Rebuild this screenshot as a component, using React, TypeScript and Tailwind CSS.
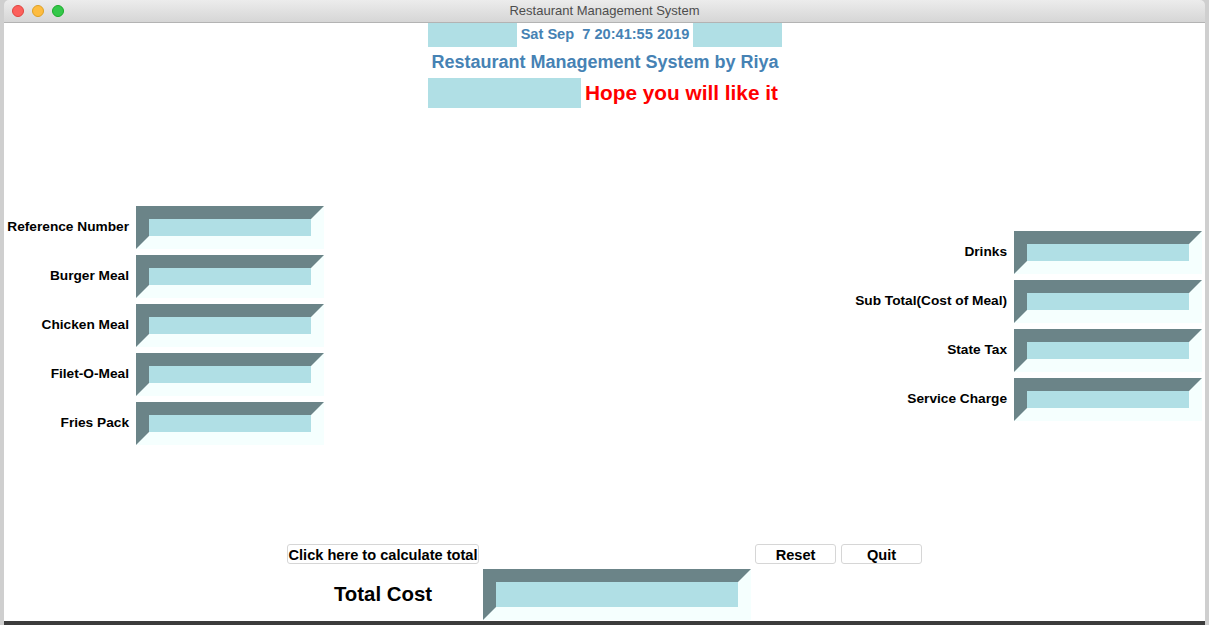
import React from "react";

function Entry(props: { wide?: boolean }) {
  const size = props.wide ? "h-[51px] w-[268px]" : "h-[43px] w-[188px]";
  return (
    <div
      className={`${size} shrink-0 border-[13px] border-t-[#6b8488] border-l-[#6b8488] border-r-[#f5fffe] border-b-[#f5fffe] bg-[#b0dfe5]`}
    />
  );
}

function Field(props: { label: string; labelWidth: string }) {
  return (
    <div className="flex items-center">
      <div
        className={`${props.labelWidth} whitespace-nowrap pr-[7px] text-right text-[13.7px] font-bold text-black`}
      >
        {props.label}
      </div>
      <Entry />
    </div>
  );
}

const leftItems = [
  "Reference Number",
  "Burger Meal",
  "Chicken Meal",
  "Filet-O-Meal",
  "Fries Pack",
];

const rightItems = ["Drinks", "Sub Total(Cost of Meal)", "State Tax", "Service Charge"];

export default function App() {
  return (
    <div className="flex h-[625px] w-[1209px] flex-col overflow-hidden bg-[#cfcfcf] pl-[4px] pr-[4px] font-['Liberation_Sans',Arial,sans-serif]">
      <div className="flex w-[1201px] flex-col">
        {/* title bar */}
        <div className="relative flex h-[23px] items-center justify-center rounded-t-[5px] border-b border-[#b3b3b3] bg-gradient-to-b from-[#ececec] to-[#d6d6d6]">
          <div className="absolute left-[8px] top-[5px] flex gap-[8px]">
            <span className="h-[12px] w-[12px] rounded-full border border-[#e0443e] bg-[#fc605c]" />
            <span className="h-[12px] w-[12px] rounded-full border border-[#dea123] bg-[#fdbc40]" />
            <span className="h-[12px] w-[12px] rounded-full border border-[#1aab29] bg-[#34c84a]" />
          </div>
          <span className="text-[13px] text-[#4d4d4d]">Restaurant Management System</span>
        </div>

        {/* window content */}
        <div className="flex h-[598px] flex-col overflow-hidden bg-white pl-[1px]">
          <div className="flex flex-col items-center">
            <div className="flex h-[24px] w-[354px]">
              <div className="w-[89px] bg-[#b0dfe5]" />
              <div className="flex flex-1 items-center justify-center whitespace-pre text-[14.6px] font-bold text-[#4682b4]">
                Sat Sep  7 20:41:55 2019
              </div>
              <div className="w-[89px] bg-[#b0dfe5]" />
            </div>
            <div className="flex h-[31px] items-center text-[18px] font-bold text-[#4682b4]">
              Restaurant Management System by Riya
            </div>
            <div className="flex h-[30px] w-[354px] items-center">
              <div className="h-[30px] w-[153px] bg-[#b0dfe5]" />
              <div className="ml-[4px] whitespace-nowrap text-[20.8px] font-bold text-[#ff0000]">
                Hope you will like it
              </div>
            </div>
          </div>

          <div className="mt-[98px] flex items-start justify-between pr-[3px]">
            <div className="flex flex-col gap-[6px]">
              {leftItems.map((item) => (
                <Field key={item} label={item} labelWidth="w-[131px]" />
              ))}
            </div>
            <div className="mt-[25px] flex flex-col gap-[6px]">
              {rightItems.map((item) => (
                <Field key={item} label={item} labelWidth="w-[200px]" />
              ))}
            </div>
          </div>

          <div className="mt-[99px] flex items-center">
            <button className="ml-[282px] h-[20px] w-[192px] whitespace-nowrap rounded-[3px] border border-[#d6d6d6] bg-white text-[14.6px] font-bold text-black">
              Click here to calculate total
            </button>
            <button className="ml-[276px] h-[20px] w-[81px] rounded-[3px] border border-[#d6d6d6] bg-white text-[14.6px] font-bold text-black">
              Reset
            </button>
            <button className="ml-[5px] h-[20px] w-[81px] rounded-[3px] border border-[#d6d6d6] bg-white text-[14.6px] font-bold text-black">
              Quit
            </button>
          </div>

          <div className="mt-[5px] flex items-start">
            <div className="ml-[282px] flex h-[51px] w-[192px] items-center justify-center text-[20.4px] font-bold text-black">
              Total Cost
            </div>
            <div className="ml-[4px]">
              <Entry wide />
            </div>
          </div>
        </div>
      </div>
      <div className="h-[4px] bg-[#3c3c3c]" />
    </div>
  );
}
